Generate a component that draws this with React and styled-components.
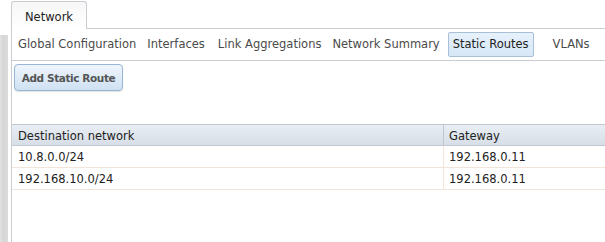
import React from 'react';
import styled, { createGlobalStyle } from 'styled-components';

const GlobalStyle = createGlobalStyle`
  body {
    margin: 0;
    background: #fff;
    font-family: "DejaVu Sans", Verdana, sans-serif;
    font-size: 11.5px;
    color: #333;
  }
`;

const Page = styled.div`
  display: flex;
  width: 605px;
  height: 242px;
  overflow: hidden;
`;

const SideStrip = styled.div`
  width: 8px;
  margin-top: 35px;
  margin-right: 3px;
  background: linear-gradient(to right, #e4e4e4 0, #d6d6d6 3px, #dcdcdc 8px);
`;

const Main = styled.div`
  flex: 1;
  display: flex;
  flex-direction: column;
  min-width: 0;
`;

const TabStrip = styled.div`
  display: flex;
  height: 29px;
  border-bottom: 1px solid #c9cdd2;
  box-sizing: border-box;
  padding-top: 1px;
`;

const Tab = styled.div`
  width: 76px;
  box-sizing: border-box;
  border: 1px solid #c9cdd2;
  border-bottom: none;
  border-radius: 3px 3px 0 0;
  margin-bottom: -1px;
  background: linear-gradient(#f7f7f7, #ffffff);
  padding: 8px 0 0 13px;
  color: #222;
`;

const Panel = styled.div`
  flex: 1;
  border-left: 1px solid #c9cdd2;
  display: flex;
  flex-direction: column;
`;

const SubNav = styled.div`
  display: flex;
  align-items: center;
  height: 32px;
  box-sizing: border-box;
  border-bottom: 1px solid #c9cdd2;
  padding-left: 1px;
  white-space: nowrap;
`;

const NavItem = styled.div`
  padding: 4px 4px 5px;
  border: 1px solid ${(p) => (p.$active ? '#a9bfd5' : 'transparent')};
  border-radius: 2px;
  background: ${(p) => (p.$active ? 'linear-gradient(#e6f1fb, #d6e7f7)' : 'none')};
  color: ${(p) => (p.$active ? '#222' : '#4a4a4a')};
  margin-left: ${(p) => p.$gap || 0}px;
`;

const ActionBar = styled.div`
  padding: 3px 0 0 2px;
  height: 60px;
`;

const Button = styled.button`
  width: 109px;
  height: 27px;
  border: 1px solid #98b6d4;
  border-radius: 4px;
  background: linear-gradient(#eef5fc, #cfe1f3);
  box-shadow: 0 1px 1px rgba(0, 0, 0, 0.12);
  font-family: inherit;
  font-size: 10.5px;
  letter-spacing: -0.4px;
  font-weight: bold;
  color: #555;
  padding: 0;
`;

const Table = styled.div`
  display: grid;
  grid-template-columns: 431px 1fr;
`;

const HeadCell = styled.div`
  height: 22px;
  box-sizing: border-box;
  border-top: 1px solid #c2c8d0;
  border-bottom: 1px solid #c2c8d0;
  border-left: ${(p) => (p.$first ? 'none' : '1px solid #c2c8d0')};
  background: linear-gradient(#e9eef4, #d7dee7);
  padding: 4px 0 0 ${(p) => (p.$first ? 6 : 5)}px;
  color: #222;
`;

const Cell = styled.div`
  height: 22px;
  box-sizing: border-box;
  border-bottom: 1px solid #f2e4d8;
  border-left: ${(p) => (p.$first ? 'none' : '1px solid #f2e4d8')};
  padding: 4px 0 0 ${(p) => (p.$first ? 6 : 5)}px;
  color: #222;
`;

const navItems = [
  { label: 'Global Configuration', gap: 0 },
  { label: 'Interfaces', gap: 1 },
  { label: 'Link Aggregations', gap: 3 },
  { label: 'Network Summary', gap: 1 },
  { label: 'Static Routes', gap: 3, active: true },
  { label: 'VLANs', gap: 14 },
];

const routes = [
  { dest: '10.8.0.0/24', gw: '192.168.0.11' },
  { dest: '192.168.10.0/24', gw: '192.168.0.11' },
];

export default function App() {
  return (
    <>
      <GlobalStyle />
      <Page>
        <SideStrip />
        <Main>
          <TabStrip>
            <Tab>Network</Tab>
          </TabStrip>
          <Panel>
            <SubNav>
              {navItems.map((item) => (
                <NavItem key={item.label} $active={item.active} $gap={item.gap}>
                  {item.label}
                </NavItem>
              ))}
            </SubNav>
            <ActionBar>
              <Button>Add Static Route</Button>
            </ActionBar>
            <Table>
              <HeadCell $first>Destination network</HeadCell>
              <HeadCell>Gateway</HeadCell>
              {routes.map((r) => (
                <React.Fragment key={r.dest}>
                  <Cell $first>{r.dest}</Cell>
                  <Cell>{r.gw}</Cell>
                </React.Fragment>
              ))}
            </Table>
          </Panel>
        </Main>
      </Page>
    </>
  );
}
